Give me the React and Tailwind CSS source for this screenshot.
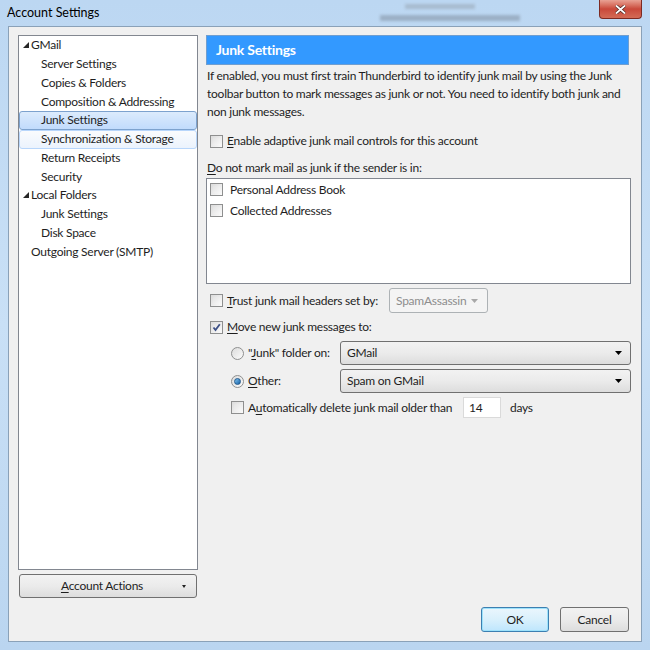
const font = { fontFamily: 'Lato, "Noto Sans", sans-serif' };

function Check({ checked = false }) {
  return (
    <span className="relative inline-block w-[13px] h-[13px] shrink-0 border border-[#8e8f8f] bg-gradient-to-br from-[#dcdcdc] to-[#fbfbfb]">
      <span className="absolute inset-[2px] bg-gradient-to-br from-[#e4e4e4] to-[#f7f7f7]" />
      {checked && (
        <svg className="absolute inset-0" width="11" height="11" viewBox="0 0 11 11">
          <path d="M2.5 5.5 L4.5 8 L8.8 2.2" fill="none" stroke="#3c4f86" strokeWidth="1.8" />
        </svg>
      )}
    </span>
  );
}

function Radio({ checked = false }) {
  return (
    <span className="relative inline-flex items-center justify-center w-[13px] h-[13px] shrink-0 rounded-full border border-[#8e8f8f] bg-gradient-to-br from-[#dcdcdc] to-[#fbfbfb]">
      {checked && <span className="w-[7px] h-[7px] rounded-full bg-gradient-to-br from-[#7fc4f0] to-[#0d5fa5] border border-[#20588c]" />}
    </span>
  );
}

function Caret({ color = '#000' }) {
  return (
    <svg width="7" height="4" viewBox="0 0 7 4">
      <path d="M0 0 H7 L3.5 4 Z" fill={color} />
    </svg>
  );
}

function Combo({ label, className = '' }) {
  return (
    <div className={`flex items-center justify-between h-[24px] px-[6px] pr-[8px] rounded-[3px] border border-[#707070] bg-gradient-to-b from-[#f2f2f2] via-[#ebebeb] to-[#dddddd] text-[#1e1e1e] ${className}`}>
      <span>{label}</span>
      <Caret />
    </div>
  );
}

function U({ children }) {
  return <span className="underline underline-offset-2">{children}</span>;
}

const tree = [
  { label: 'GMail', level: 0, arrow: true },
  { label: 'Server Settings', level: 1 },
  { label: 'Copies & Folders', level: 1 },
  { label: 'Composition & Addressing', level: 1 },
  { label: 'Junk Settings', level: 1, selected: true },
  { label: 'Synchronization & Storage', level: 1, hover: true },
  { label: 'Return Receipts', level: 1 },
  { label: 'Security', level: 1 },
  { label: 'Local Folders', level: 0, arrow: true },
  { label: 'Junk Settings', level: 1 },
  { label: 'Disk Space', level: 1 },
  { label: 'Outgoing Server (SMTP)', level: 0 },
];

function TreeRow({ item }) {
  let box = 'border border-transparent';
  if (item.selected) box = 'border border-[#7da2ce] rounded-[3px] bg-gradient-to-b from-[#dcebfc] to-[#c1dbfc]';
  if (item.hover) box = 'border border-[#b8d6fb] rounded-[3px] bg-gradient-to-b from-[#fafbfd] to-[#ebf3fd]';
  return (
    <div className={`h-[18.75px] flex items-center ${box}`}>
      {item.level === 0 ? (
        <div className="flex items-center pl-[3px]">
          <span className="w-[8px] flex items-center">
            {item.arrow && (
              <svg width="6" height="6" viewBox="0 0 6 6">
                <path d="M6 0 V6 H0 Z" fill="#262626" />
              </svg>
            )}
          </span>
          <span>{item.label}</span>
        </div>
      ) : (
        <span className="pl-[21px]">{item.label}</span>
      )}
    </div>
  );
}

export default function App() {
  return (
    <div
      className="w-[650px] h-[650px] relative bg-gradient-to-b from-[#bcd7f2] via-[#c9e0f6] to-[#bad5f0] text-[12px] tracking-[-0.25px] text-[#1e1e1e] leading-none"
      style={font}
    >
      <div className="h-[26px] flex items-center pl-[7px] pt-[1px] text-[12.5px] text-black tracking-normal">Account Settings</div>
      <div className="absolute top-[4px] left-[380px] flex flex-col gap-[6px] blur-[1.5px] opacity-60">
        <span className="w-[70px] h-[5px] bg-[#9aa9b8] ml-[25px]" />
        <span className="w-[140px] h-[6px] bg-[#8696a8]" />
      </div>
      <div className="absolute top-0 right-[8px] w-[43px] h-[19px] rounded-b-[4px] border border-[#7d2a22] border-t-0 bg-gradient-to-b from-[#e8a194] via-[#c9483a] to-[#d36b56] flex items-center justify-center">
        <svg width="11" height="9" viewBox="0 0 11 9">
          <path d="M1 0.5 L10 8.5 M10 0.5 L1 8.5" stroke="#4a2420" strokeWidth="3.2" />
          <path d="M1 0.5 L10 8.5 M10 0.5 L1 8.5" stroke="#ffffff" strokeWidth="1.8" />
        </svg>
      </div>

      <div className="mx-[8px] h-[616px] bg-[#f0f0f0] border border-[#8aa1b8] flex items-start pl-[9px] pt-[8px] gap-[8px]">
        {/* left column */}
        <div className="flex flex-col w-[180px]">
          <div className="h-[535px] bg-white border border-[#828790]">
            {tree.map((item, i) => (
              <TreeRow key={i} item={item} />
            ))}
          </div>
          <div className="mt-[4px] ml-[1px] w-[178px] h-[24px] rounded-[3px] border border-[#707070] bg-gradient-to-b from-[#f2f2f2] via-[#ebebeb] to-[#dddddd] flex items-center relative">
            <span className="flex-1 text-center pr-[12px]">
              <U>A</U>ccount Actions
            </span>
            <span className="absolute right-[10px] top-[10px]">
              <svg width="4" height="3" viewBox="0 0 4 3">
                <path d="M0 0 H4 L2 3 Z" fill="#222" />
              </svg>
            </span>
          </div>
        </div>

        {/* right column */}
        <div className="w-[425px] flex flex-col">
          <div className="w-[423px] h-[30px] bg-[#3399ff] border border-[#6f9ed0] flex items-center pl-[9px] text-white font-bold text-[14px]">
            Junk Settings
          </div>
          <p className="mt-[2px] pl-[1px] leading-[18px] text-[12px]">
            If enabled, you must first train Thunderbird to identify junk mail by using the Junk toolbar button to mark messages as junk or not. You need to identify both junk and non junk messages.
          </p>
          <div className="mt-[11px] h-[18px] flex items-center pl-[4px] gap-[4px]">
            <Check />
            <span>
              <U>E</U>nable adaptive junk mail controls for this account
            </span>
          </div>
          <div className="mt-[9px] h-[18px] flex items-center pl-[1px]">
            <span>
              <U>D</U>o not mark mail as junk if the sender is in:
            </span>
          </div>
          <div className="mt-[1px] h-[106px] bg-white border border-[#828790] pt-[4px] pl-[3px] flex flex-col gap-[8px]">
            <div className="flex items-center gap-[7px]">
              <Check />
              <span>Personal Address Book</span>
            </div>
            <div className="flex items-center gap-[7px]">
              <Check />
              <span>Collected Addresses</span>
            </div>
          </div>
          <div className="mt-[4px] h-[25px] flex items-center pl-[4px]">
            <Check />
            <span className="ml-[4px] w-[162px]">
              <U>T</U>rust junk mail headers set by:
            </span>
            <div className="w-[99px] h-[25px] rounded-[3px] border border-[#adb2b5] bg-[#f4f4f4] text-[#8d8d8d] flex items-center justify-between pl-[6px] pr-[9px]">
              <span>SpamAssassin</span>
              <Caret color="#a8a8a8" />
            </div>
          </div>
          <div className="mt-[5px] h-[18px] flex items-center pl-[4px] gap-[4px]">
            <Check checked />
            <span>
              <U>M</U>ove new junk messages to:
            </span>
          </div>
          <div className="mt-[5px] h-[24px] flex items-center pl-[25px]">
            <Radio />
            <span className="ml-[4px] w-[92px] whitespace-nowrap">
              "<U>J</U>unk" folder on:
            </span>
            <Combo label="GMail" className="w-[291px]" />
          </div>
          <div className="mt-[4px] h-[24px] flex items-center pl-[25px]">
            <Radio checked />
            <span className="ml-[4px] w-[92px]">
              <U>O</U>ther:
            </span>
            <Combo label="Spam on GMail" className="w-[291px]" />
          </div>
          <div className="mt-[4px] h-[21px] flex items-center pl-[25px]">
            <Check />
            <span className="ml-[4px] w-[215px] whitespace-nowrap">
              A<U>u</U>tomatically delete junk mail older than
            </span>
            <div className="w-[38px] h-[21px] bg-white border border-[#dadada] flex items-center pl-[5px]">14</div>
            <span className="ml-[9px]">days</span>
          </div>

          <div className="mt-[189px] flex justify-end gap-[11px] pr-[2px]">
            <div className="w-[68px] h-[25px] rounded-[3px] border border-[#3c7fb1] shadow-[inset_0_0_0_1px_#9de2fb] bg-gradient-to-b from-[#eaf6fd] via-[#d9f0fc] to-[#bee6fd] flex items-center justify-center">
              OK
            </div>
            <div className="w-[69px] h-[25px] rounded-[3px] border border-[#707070] bg-gradient-to-b from-[#f2f2f2] via-[#ebebeb] to-[#dddddd] flex items-center justify-center">
              Cancel
            </div>
          </div>
        </div>
      </div>
    </div>
  );
}
